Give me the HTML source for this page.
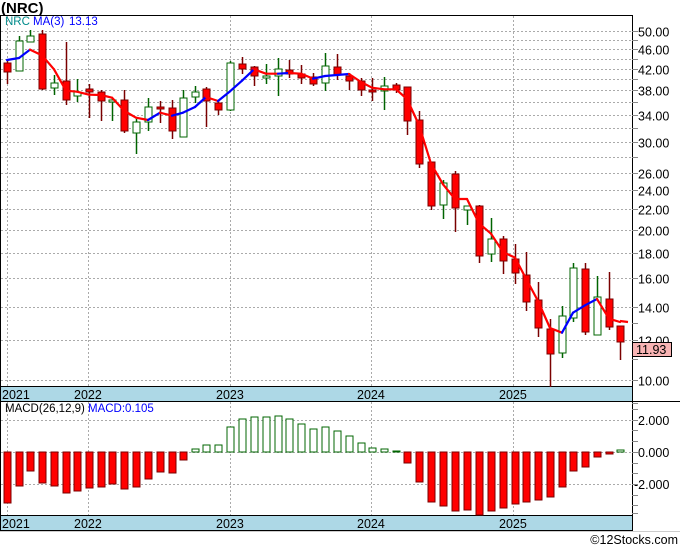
<!DOCTYPE html>
<html><head><meta charset="utf-8"><style>
body{margin:0;background:#fff;width:680px;height:546px;overflow:hidden;font-family:"Liberation Sans",sans-serif}
svg text{font-family:"Liberation Sans",sans-serif}
</style></head><body>
<svg id="s" width="680" height="546" xmlns="http://www.w3.org/2000/svg"></svg>
<script>
const s=document.getElementById('s');let h='';
const Y=p=>380-(Math.log(p)-Math.log(10))*216.9;
h+='<rect x="0" y="0" width="680" height="546" fill="#fff"/>';
h+='<text x="1" y="13" font-size="15" font-weight="bold" fill="#000">(NRC)</text>';
h+='<rect x="0.5" y="15.5" width="632" height="515" fill="#fff" stroke="#000"/>';
h+='<rect x="1" y="387" width="631" height="14" fill="#add8e6"/>';
h+='<line x1="0" y1="401.5" x2="680" y2="401.5" stroke="#000"/>';
h+='<line x1="0" y1="386.5" x2="632" y2="386.5" stroke="#000"/>';
h+='<rect x="1" y="516" width="631" height="14" fill="#add8e6"/>';
h+='<line x1="0" y1="515.5" x2="632" y2="515.5" stroke="#000"/>';
h+='<line x1="632.5" y1="15" x2="632.5" y2="531" stroke="#000"/>';
[[7,'2021'],[88,'2022'],[230,'2023'],[371,'2024'],[513,'2025']].forEach(([x,t])=>{
h+=`<line x1="${x}.5" y1="16" x2="${x}.5" y2="386" stroke="#aaa" stroke-dasharray="2,2"/>`;
h+=`<line x1="${x}.5" y1="402" x2="${x}.5" y2="515" stroke="#aaa" stroke-dasharray="2,2"/>`;
const tx=x==7?2:x-14;
h+=`<text x="${tx}" y="399" font-size="12.5" fill="#000">${t}</text>`;
h+=`<text x="${tx}" y="528" font-size="12.5" fill="#000">${t}</text>`;});
const lab=[50,46,42,38,34,30,26,24,22,20,18,16,14,12,10];
for(let p=10;p<=50;p+=2){const y=Math.round(Y(p))+.5;
 h+=`<line x1="1" y1="${y}" x2="632" y2="${y}" stroke="#aaa" stroke-dasharray="2,2"/><line x1="632" y1="${y}" x2="638" y2="${y}" stroke="#888"/>`;
 if(lab.includes(p))h+=`<text x="638" y="${y+5}" font-size="12.5" fill="#000">${p}.00</text>`;}
[11,13,9].forEach(p=>{const y=Math.round(Y(p))+.5;h+=`<line x1="632" y1="${y}" x2="638" y2="${y}" stroke="#888"/>`;});
const C=[[7,60,84,63,72,0],[19,36,71,41,71,1],[30,30,42,36,42,1],[42,30,90,34,89,0],[54,75,95,83,88,1],[66,42,105,81,100,0],[77,79,102,92,96,1],[89,84,118,89,92,0],[101,90,121,92,101,0],[112,98,121,100,102,1],[124,90,133,100,131,0],[136,119,154,122,133,1],[148,98,131,107,122,1],[160,101,123,107,109,0],[172,100,139,108,131,0],[183,90,137,98,137,1],[195,86,103,92,97,1],[206,87,127,89,101,0],[218,100,115,103,110,0],[230,61,111,63,110,1],[242,57,74,64,69,0],[254,66,86,67,76,0],[266,64,84,76,78,1],[278,58,96,69,76,1],[289,60,78,70,74,0],[301,65,84,74,78,0],[313,73,86,77,84,0],[325,53,91,66,83,1],[337,54,80,67,75,0],[349,73,90,76,81,0],[361,78,96,81,90,0],[372,78,101,90,92,0],[384,77,110,86,91,1],[396,83,93,85,90,0],[407,87,135,87,121,0],[419,111,168,120,164,0],[431,162,210,162,206,0],[443,180,219,183,205,1],[455,171,232,174,208,0],[467,206,225,206,210,1],[479,205,263,206,256,0],[491,218,262,239,254,1],[503,236,274,239,261,0],[515,244,284,259,273,0],[526,252,311,275,302,0],[538,282,337,300,328,0],[550,319,387,329,354,0],[562,306,358,316,353,1],[573,263,322,268,318,1],[585,263,335,269,332,0],[597,276,335,297,335,1],[609,272,330,299,327,0],[620,326,360,326,342,0]];
C.forEach(([x,wt,wb,bt,bb,g])=>{const c=g?'#006400':'#7a0000';
 h+=`<line x1="${x+.5}" y1="${wt}" x2="${x+.5}" y2="${wb}" stroke="${c}" stroke-width="1.5"/>`;
 h+=`<rect x="${x-3}" y="${bt}" width="7" height="${Math.max(1,bb-bt)}" fill="${g?'#fff':'#f00'}" stroke="${c}"/>`;});
const cl=C.map(c=>c[5]?c[3]:c[4]);const ma=[];
for(let i=2;i<cl.length;i++)ma.push([C[i][0],(cl[i]+cl[i-1]+cl[i-2])/3]);
ma.unshift([C[0][0],60],[C[1][0],58]);
for(let i=1;i<ma.length;i++){const up=ma[i][1]<ma[i-1][1];
 h+=`<line x1="${ma[i-1][0]}" y1="${ma[i-1][1]}" x2="${ma[i][0]}" y2="${ma[i][1]}" stroke="${up?'#0000ff':'#ff0000'}" stroke-width="2.2" stroke-linecap="round"/>`;}
h+='<line x1="620" y1="321" x2="628" y2="322" stroke="#f00" stroke-width="2.2"/>';
h+='<text x="5" y="25" font-size="11.5" fill="#008b8b">NRC</text><text x="33" y="25" font-size="11.5" fill="#00f">MA(3)</text><text x="69" y="25" font-size="11.5" fill="#00f">13.13</text>';
h+='<rect x="632.5" y="342.5" width="39" height="14" fill="#f8b4b4" stroke="#000"/><text x="636" y="354" font-size="12.5" fill="#000">11.93</text>';
[[420,'2.000'],[452,'0.000'],[484,'-2.000']].forEach(([y,t])=>{h+=`<line x1="1" y1="${y+.5}" x2="632" y2="${y+.5}" stroke="#aaa" stroke-dasharray="2,2"/><line x1="632" y1="${y+.5}" x2="638" y2="${y+.5}" stroke="#888"/><text x="${t[0]=='-'?634:638}" y="${y+5}" font-size="12.5" fill="#000">${t}</text>`;});
[409,430,441,463,473,495,505,513].forEach(y=>h+=`<line x1="632" y1="${y+.5}" x2="638" y2="${y+.5}" stroke="#888"/>`);
const M=[503,486,471,483,486,493,491,488,487,484,489,487,479,472,473,460,449,445,445,427,419,417,417,416,419,424,429,427,431,436,443,448,449,451,463,482,502,506,511,510,515,511,508,504,502,500,497,487,471,467,457,454,450];
M.forEach((v,i)=>{const x=C[i][0];const g=v<452;const y1=Math.min(v,452),hh=Math.max(1,Math.abs(v-452));
 h+=`<rect x="${x-3}" y="${y1}" width="7" height="${hh}" fill="${g?'#fff':'#f00'}" stroke="${g?'#006400':'#7a0000'}"/>`;});
h+='<text x="5" y="412" font-size="11.5" fill="#000">MACD(26,12,9)</text><text x="88" y="412" font-size="11.5" fill="#00f">MACD:0.105</text>';
h+='<line x1="0" y1="531.5" x2="680" y2="531.5" stroke="#ccc"/>';
h+='<text x="678" y="544" font-size="12.5" text-anchor="end" fill="#000">©12Stocks.com</text>';
s.innerHTML=h;
</script>
</body></html>
